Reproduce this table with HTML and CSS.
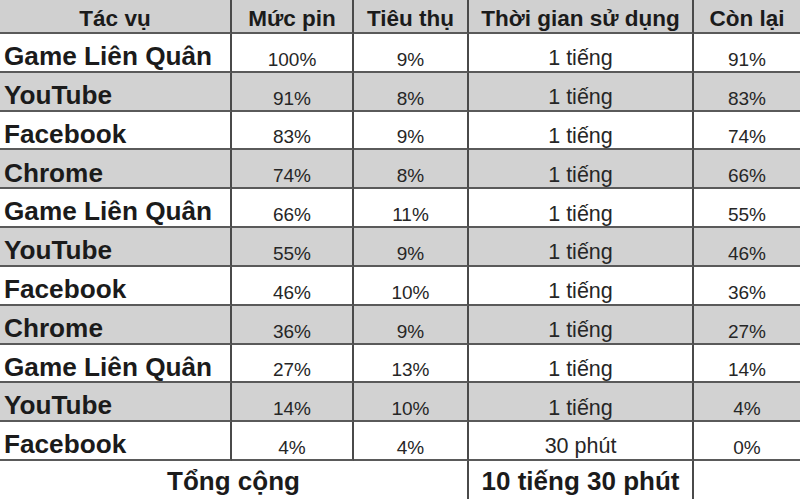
FILE: index.html
```html
<!DOCTYPE html>
<html lang="vi">
<head>
<meta charset="utf-8">
<title>Bảng thời lượng pin</title>
<link rel="stylesheet" href="styles.css">
</head>
<body>
<div class="sheet">
  <div class="c hd">Tác vụ</div>
  <div class="c hd">Mức pin</div>
  <div class="c hd">Tiêu thụ</div>
  <div class="c hd">Thời gian sử dụng</div>
  <div class="c hd last">Còn lại</div>

  <div class="c lbl">Game Liên Quân</div><div class="c v">100%</div><div class="c v">9%</div><div class="c v t">1 tiếng</div><div class="c v last">91%</div>
  <div class="c lbl g">YouTube</div><div class="c v g">91%</div><div class="c v g">8%</div><div class="c v t g">1 tiếng</div><div class="c v last g">83%</div>
  <div class="c lbl">Facebook</div><div class="c v">83%</div><div class="c v">9%</div><div class="c v t">1 tiếng</div><div class="c v last">74%</div>
  <div class="c lbl g">Chrome</div><div class="c v g">74%</div><div class="c v g">8%</div><div class="c v t g">1 tiếng</div><div class="c v last g">66%</div>
  <div class="c lbl">Game Liên Quân</div><div class="c v">66%</div><div class="c v">11%</div><div class="c v t">1 tiếng</div><div class="c v last">55%</div>
  <div class="c lbl g">YouTube</div><div class="c v g">55%</div><div class="c v g">9%</div><div class="c v t g">1 tiếng</div><div class="c v last g">46%</div>
  <div class="c lbl">Facebook</div><div class="c v">46%</div><div class="c v">10%</div><div class="c v t">1 tiếng</div><div class="c v last">36%</div>
  <div class="c lbl g">Chrome</div><div class="c v g">36%</div><div class="c v g">9%</div><div class="c v t g">1 tiếng</div><div class="c v last g">27%</div>
  <div class="c lbl">Game Liên Quân</div><div class="c v">27%</div><div class="c v">13%</div><div class="c v t">1 tiếng</div><div class="c v last">14%</div>
  <div class="c lbl g">YouTube</div><div class="c v g">14%</div><div class="c v g">10%</div><div class="c v t g">1 tiếng</div><div class="c v last g">4%</div>
  <div class="c lbl">Facebook</div><div class="c v">4%</div><div class="c v">4%</div><div class="c v t">30 phút</div><div class="c v last">0%</div>

  <div class="c tot span3">Tổng cộng</div>
  <div class="c tot">10 tiếng 30 phút</div>
  <div class="c tot last"></div>
</div>
</body>
</html>
```
FILE: styles.css
```css
html, body {
  margin: 0;
  padding: 0;
  background: #ffffff;
}
.sheet {
  width: 800px;
  height: 499px;
  display: grid;
  grid-template-columns: 232px 122px 115px 225px 106px;
  grid-template-rows: 34px repeat(11, 38.82px) 38px;
  font-family: "Liberation Sans", Arial, sans-serif;
  color: #1b1b1b;
  overflow: hidden;
}
.c {
  box-sizing: border-box;
  border-right: 2px solid #4a4a4a;
  border-bottom: 2px solid #5a5a5a;
  display: flex;
  align-items: flex-end;
  justify-content: center;
  line-height: 1;
  padding-bottom: 2px;
  white-space: nowrap;
}
.last { border-right: none; }
.hd {
  background: #d0d0d0;
  font-weight: bold;
  font-size: 22.5px;
  padding-bottom: 1.5px;
}
.g { background: #d2d2d2; }
.lbl {
  justify-content: flex-start;
  padding-left: 4px;
  font-weight: bold;
  font-size: 26.2px;
  padding-bottom: 1.5px;
}
.v {
  font-size: 19px;
  color: #262626;
}
.v.t {
  font-size: 21.5px;
  padding-bottom: 1px;
}
.tot {
  border-bottom: none;
  font-weight: bold;
  font-size: 26px;
  padding-bottom: 5px;
}
.span3 { grid-column: span 3; }
```
